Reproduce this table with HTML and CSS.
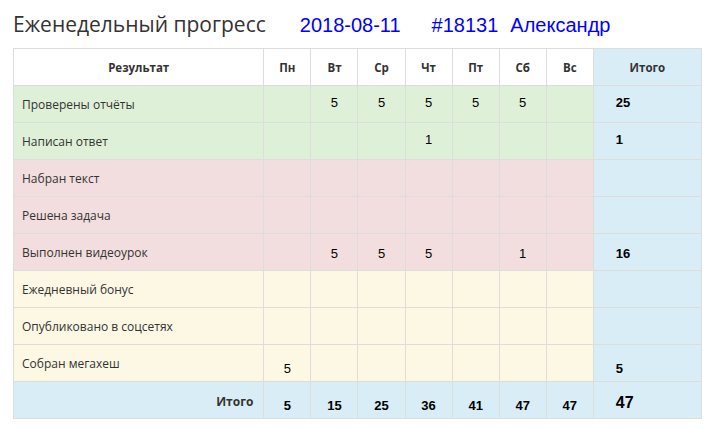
FILE: index.html
```html
<!DOCTYPE html>
<html lang="ru">
<head>
<meta charset="utf-8">
<link rel="stylesheet" href="styles.css">
</head>
<body>
<div class="page">
  <div class="head">
    <h1 class="title">Еженедельный прогресс</h1>
    <span class="meta date">2018-08-11</span>
    <span class="meta num">#18131</span>
    <span class="meta name">Александр</span>
  </div>
  <table class="grid">
    <colgroup>
      <col class="c-name"><col class="c-day"><col class="c-day"><col class="c-day"><col class="c-day"><col class="c-day"><col class="c-day"><col class="c-day"><col class="c-total">
    </colgroup>
    <thead>
      <tr>
        <th>Результат</th><th>Пн</th><th>Вт</th><th>Ср</th><th>Чт</th><th>Пт</th><th>Сб</th><th>Вс</th><th class="info">Итого</th>
      </tr>
    </thead>
    <tbody>
      <tr class="success">
        <td class="label">Проверены отчёты</td><td></td><td class="v">5</td><td class="v">5</td><td class="v">5</td><td class="v">5</td><td class="v">5</td><td></td><td class="info tot">25</td>
      </tr>
      <tr class="success">
        <td class="label">Написан ответ</td><td></td><td></td><td></td><td class="v">1</td><td></td><td></td><td></td><td class="info tot">1</td>
      </tr>
      <tr class="danger">
        <td class="label">Набран текст</td><td></td><td></td><td></td><td></td><td></td><td></td><td></td><td class="info tot"></td>
      </tr>
      <tr class="danger">
        <td class="label">Решена задача</td><td></td><td></td><td></td><td></td><td></td><td></td><td></td><td class="info tot"></td>
      </tr>
      <tr class="danger">
        <td class="label">Выполнен видеоурок</td><td></td><td class="v low1">5</td><td class="v low1">5</td><td class="v low1">5</td><td></td><td class="v low1">1</td><td></td><td class="info tot low1">16</td>
      </tr>
      <tr class="warning">
        <td class="label">Ежедневный бонус</td><td></td><td></td><td></td><td></td><td></td><td></td><td></td><td class="info tot"></td>
      </tr>
      <tr class="warning">
        <td class="label">Опубликовано в соцсетях</td><td></td><td></td><td></td><td></td><td></td><td></td><td></td><td class="info tot"></td>
      </tr>
      <tr class="warning">
        <td class="label">Собран мегахеш</td><td class="v low">5</td><td></td><td></td><td></td><td></td><td></td><td></td><td class="info tot low">5</td>
      </tr>
    </tbody>
    <tfoot>
      <tr class="info">
        <td class="sum-label">Итого</td><td class="sum low">5</td><td class="sum low">15</td><td class="sum low">25</td><td class="sum low">36</td><td class="sum low">41</td><td class="sum low">47</td><td class="sum low">47</td><td class="grand">47</td>
      </tr>
    </tfoot>
  </table>
</div>
</body>
</html>
```
FILE: styles.css
```css
html, body {
  margin: 0;
  padding: 0;
  background: #fff;
}
.page {
  padding: 9px 13px 0 13px;
  font-family: "Open Sans", "DejaVu Sans", sans-serif;
  color: #333;
}
.head {
  display: flex;
  align-items: baseline;
  height: 39px;
}
.title {
  margin: 0;
  font-family: "Open Sans", sans-serif;
  font-weight: 400;
  font-size: 21px;
  line-height: 30px;
  color: #333;
}
.meta {
  font-family: "Liberation Sans", Arial, sans-serif;
  font-size: 20px;
  color: #0000ff;
}
.date { margin-left: 34px; }
.num { margin-left: 31px; }
.name { margin-left: 12px; }

.grid {
  border-collapse: collapse;
  table-layout: fixed;
  width: 689px;
  border: 1px solid #ddd;
}
.c-name { width: 250px; }
.c-day { width: 47px; }
.c-total { width: 108px; }

.grid th, .grid td {
  border: 1px solid #ddd;
  height: 36px;
  padding: 0 8px;
  box-sizing: border-box;
  vertical-align: middle;
}
.grid tr { height: 37px; }
.grid th {
  font-family: "Open Sans", sans-serif;
  font-weight: 700;
  font-size: 11.5px;
  text-align: center;
  color: #333;
}
.grid td {
  font-family: "Liberation Sans", Arial, sans-serif;
  font-size: 13px;
  color: #000;
  text-align: center;
}
.grid td.label {
  font-family: "Open Sans", sans-serif;
  font-size: 12px;
  color: #333;
  text-align: left;
}
.grid td.v { padding-bottom: 3px; }
.grid td.tot {
  text-align: left;
  font-weight: 700;
  padding-left: 22px;
  padding-bottom: 3px;
}
.grid td.low1 { padding-top: 2px; padding-bottom: 0; }
.grid td.low { padding-top: 10px; padding-bottom: 0; }

.success td { background: #dff0d8; }
.danger td { background: #f2dede; }
.warning td { background: #fcf8e3; }
.grid .info, .info td, th.info { background: #d9edf7; }

.grid td.sum-label {
  font-family: "Open Sans", sans-serif;
  font-weight: 700;
  font-size: 12px;
  color: #333;
  text-align: right;
  padding-right: 10px;
  padding-top: 2px;
  padding-bottom: 0;
}
.grid td.sum {
  font-weight: 700;
  font-size: 13px;
}
.grid td.grand {
  text-align: left;
  font-weight: 700;
  font-size: 16px;
  padding-left: 22px;
  padding-top: 6px;
  padding-bottom: 0;
}
```
